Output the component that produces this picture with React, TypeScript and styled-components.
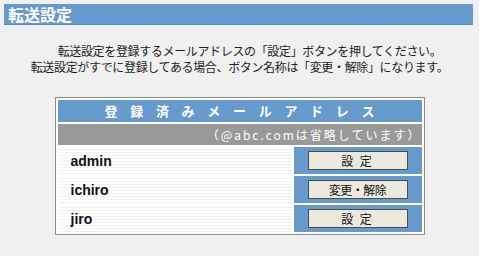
import styled, { createGlobalStyle } from 'styled-components';

type Entry = {
  name: string;
  registered: boolean;
};

const entries: Entry[] = [
  { name: 'admin', registered: false },
  { name: 'ichiro', registered: true },
  { name: 'jiro', registered: false },
];

const GlobalStyle = createGlobalStyle`
  body {
    margin: 0;
    background: #f0f0f0;
    font-family: "Noto Sans CJK JP", "Liberation Sans", sans-serif;
    color: #222;
  }
`;

const App = () => {
  return (
    <Page>
      <GlobalStyle />
      <TitleBar>転送設定</TitleBar>
      <Notice>
        <NoticeLine $shift={20}>
          転送設定を登録するメールアドレスの「設定」ボタンを押してください。
        </NoticeLine>
        <NoticeLine>
          転送設定がすでに登録してある場合、ボタン名称は「変更・解除」になります。
        </NoticeLine>
      </Notice>
      <AddressTable>
        <HeadCell>登録済みメールアドレス</HeadCell>
        <NoteCell>（@abc.comは省略しています）</NoteCell>
        {entries.map((entry) => (
          <Row key={entry.name}>
            <NameCell>{entry.name}</NameCell>
            <ActionCell>
              <ActionButton type="button" $spaced={!entry.registered}>
                {entry.registered ? '変更・解除' : '設 定'}
              </ActionButton>
            </ActionCell>
          </Row>
        ))}
      </AddressTable>
    </Page>
  );
};

export default App;

const Page = styled.div`
  width: 479px;
  height: 256px;
  padding-top: 4px;
  box-sizing: border-box;
`;

const TitleBar = styled.h1`
  margin: 0 6px 0 4px;
  height: 21px;
  padding-left: 4px;
  background: #6699cc;
  border-bottom: 1px solid #5a8abb;
  box-sizing: border-box;
  color: #fff;
  font-size: 16px;
  font-weight: bold;
  line-height: 21px;
`;

const Notice = styled.div`
  margin-top: 18px;
  text-align: center;
`;

const NoticeLine = styled.p<{ $shift?: number }>`
  margin: 0;
  padding-left: ${(p) => p.$shift ?? 0}px;
  font-size: 12px;
  line-height: 16px;
  letter-spacing: -0.35px;
  color: #1e1e1e;
`;

const AddressTable = styled.div`
  width: 370px;
  margin: 22px auto 0;
  display: grid;
  grid-template-columns: 234px 128px;
  gap: 2px;
  padding: 2px;
  border: 1px solid #8c8c8c;
  background: #fff;
  box-sizing: border-box;
`;

const HeadCell = styled.div`
  grid-column: 1 / -1;
  height: 22px;
  background: #6699cc;
  color: #fff;
  font-size: 13px;
  font-weight: bold;
  line-height: 22px;
  text-align: center;
  letter-spacing: 12.7px;
  padding-left: 12.7px;
`;

const NoteCell = styled.div`
  grid-column: 1 / -1;
  height: 21px;
  background: #999;
  color: #fff;
  font-size: 12px;
  line-height: 21px;
  text-align: right;
  letter-spacing: 2px;
`;

const Row = styled.div`
  display: contents;
`;

const NameCell = styled.div`
  height: 27px;
  padding-left: 13px;
  display: flex;
  align-items: center;
  background: repeating-linear-gradient(
    to bottom,
    #fff 0px,
    #fff 2px,
    #f1f1f1 2px,
    #f1f1f1 3px
  );
  font-family: "Liberation Sans", Arial, sans-serif;
  font-size: 14px;
  font-weight: bold;
  color: #111;
`;

const ActionCell = styled.div`
  height: 27px;
  display: flex;
  align-items: center;
  justify-content: center;
  background: #6699cc;
`;

const ActionButton = styled.button<{ $spaced: boolean }>`
  width: 100px;
  height: 19px;
  padding: 0;
  border: 1px solid #4d4d4d;
  background: #ebe9dc;
  font-family: "Noto Sans CJK JP", sans-serif;
  font-size: 12px;
  line-height: 17px;
  letter-spacing: ${(p) => (p.$spaced ? '2px' : '-0.5px')};
  color: #111;
  cursor: pointer;
`;
